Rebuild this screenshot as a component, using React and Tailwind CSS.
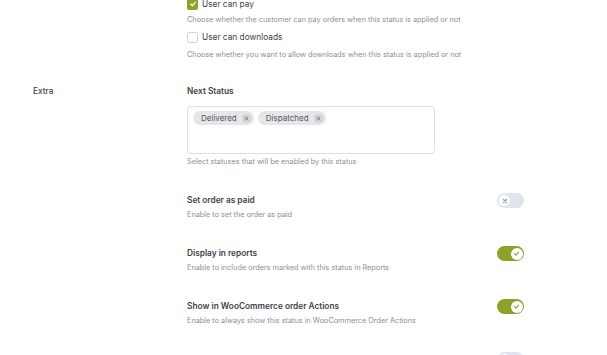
import React from "react";

const font = { fontFamily: "Inter, 'Noto Sans', sans-serif" };

function Toggle({ on }) {
  if (on) {
    return (
      <div className="w-[27px] h-[15px] rounded-full bg-[#8fa12a] flex items-center justify-end pr-[1.5px]">
        <div className="w-[12px] h-[12px] rounded-full bg-white flex items-center justify-center">
          <svg width="7" height="7" viewBox="0 0 10 10">
            <path d="M2.2 5.3 L4.2 7.2 L7.9 3" fill="none" stroke="#8fa12a" strokeWidth="1.6" strokeLinecap="round" strokeLinejoin="round" />
          </svg>
        </div>
      </div>
    );
  }
  return (
    <div className="w-[27px] h-[15px] rounded-full bg-[#dfe4ef] flex items-center pl-[1px]">
      <div className="w-[13px] h-[13px] rounded-full bg-white border border-[#e3e7f0] flex items-center justify-center">
        <svg width="6" height="6" viewBox="0 0 10 10">
          <path d="M2.5 2.5 L7.5 7.5 M7.5 2.5 L2.5 7.5" fill="none" stroke="#8e96ad" strokeWidth="2" strokeLinecap="round" />
        </svg>
      </div>
    </div>
  );
}

function Chip({ label }) {
  return (
    <div className="h-[14px] rounded-full bg-[#e6e6e8] flex items-center pl-[8px] pr-[3px] gap-[5px]">
      <span className="text-[8px] text-[#50575e] leading-none">{label}</span>
      <span className="w-[9px] h-[9px] rounded-full bg-[#d4d4d8] flex items-center justify-center">
        <svg width="5" height="5" viewBox="0 0 10 10">
          <path d="M2 2 L8 8 M8 2 L2 8" fill="none" stroke="#6b6f76" strokeWidth="1.8" strokeLinecap="round" />
        </svg>
      </span>
    </div>
  );
}

function ToggleRow({ title, desc, on }) {
  return (
    <div className="flex items-start h-[53px]">
      <div className="w-[310px] flex flex-col">
        <div className="text-[8.3px] font-semibold text-[#3c434a] leading-[14px]">{title}</div>
        <div className="text-[7.3px] text-[#8c8f94] leading-[14px] mt-[1px]">{desc}</div>
      </div>
      <div>
        <Toggle on={on} />
      </div>
    </div>
  );
}

export default function App() {
  return (
    <div className="w-[607px] h-[355px] bg-white overflow-hidden relative" style={font}>
      <div className="pl-[187px] mt-[-3px]">
        <div className="flex items-center h-[14px] gap-[4px]">
          <div className="w-[11px] h-[11px] rounded-[2px] bg-[#8fa12a] flex items-center justify-center">
            <svg width="8" height="8" viewBox="0 0 10 10">
              <path d="M2.2 5.3 L4.2 7.2 L7.9 3" fill="none" stroke="white" strokeWidth="1.6" strokeLinecap="round" strokeLinejoin="round" />
            </svg>
          </div>
          <span className="text-[8.3px] text-[#3c434a]">User can pay</span>
        </div>
        <div className="text-[7.3px] text-[#8c8f94] leading-[14px] mt-[2px]">
          Choose whether the customer can pay orders when this status is applied or not
        </div>
        <div className="flex items-center h-[14px] gap-[4px] mt-[3px]">
          <div className="w-[11px] h-[11px] rounded-[2px] border border-[#d0d3d8] bg-white" />
          <span className="text-[8.3px] text-[#3c434a]">User can downloads</span>
        </div>
        <div className="text-[7.3px] text-[#8c8f94] leading-[14px] mt-[4px]">
          Choose whether you want to allow downloads when this status is applied or not
        </div>
      </div>

      <div className="flex mt-[22px]">
        <div className="w-[187px] pl-[33px] text-[8.3px] font-medium text-[#3c434a] leading-[14px]">Extra</div>
        <div className="flex flex-col">
          <div className="text-[8.3px] font-semibold text-[#3c434a] leading-[14px]">Next Status</div>
          <div className="w-[248px] h-[48px] mt-[8px] rounded-[4px] border border-[#dcdfe6] flex items-start gap-[4px] pl-[5px] pt-[4px]">
            <Chip label="Delivered" />
            <Chip label="Dispatched" />
          </div>
          <div className="text-[7.3px] text-[#8c8f94] leading-[14px] mt-[1px]">
            Select statuses that will be enabled by this status
          </div>
          <div className="mt-[24px] flex flex-col">
            <ToggleRow title="Set order as paid" desc="Enable to set the order as paid" on={false} />
            <ToggleRow title="Display in reports" desc="Enable to include orders marked with this status in Reports" on={true} />
            <ToggleRow title="Show in WooCommerce order Actions" desc="Enable to always show this status in WooCommerce Order Actions" on={true} />
            <ToggleRow title="" desc="" on={false} />
          </div>
        </div>
      </div>
    </div>
  );
}
